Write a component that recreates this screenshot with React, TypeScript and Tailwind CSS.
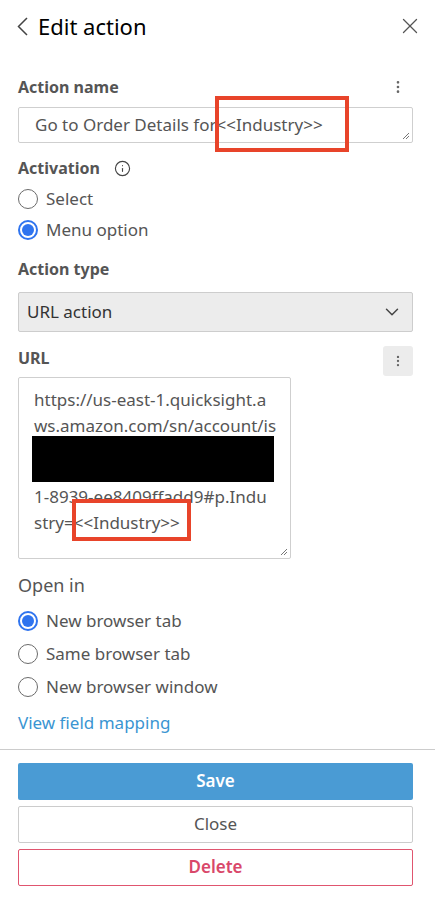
import { X, EllipsisVertical, ChevronDown, Info } from 'lucide-react';

function Radio({ checked, label, h = 'h-[33px]' }: { checked?: boolean; label: string; h?: string }) {
  return (
    <div className={`flex items-center ${h}`}>
      {checked ? (
        <span className="w-[20px] h-[20px] rounded-full border-2 border-[#2f74ef] flex items-center justify-center">
          <span className="w-[12px] h-[12px] rounded-full bg-[#2f74ef]" />
        </span>
      ) : (
        <span className="w-[20px] h-[20px] rounded-full border border-[#6b6b6b]" />
      )}
      <span className="ml-[8px] text-[17px] text-[#555]">{label}</span>
    </div>
  );
}

function Grip() {
  return (
    <svg className="absolute right-[2px] bottom-[2px]" width="8" height="8" viewBox="0 0 8 8">
      <path d="M7 1 L1 7 M7 4 L4 7" stroke="#777" strokeWidth="1" />
    </svg>
  );
}

export default function App() {
  return (
    <div className="w-[435px] h-[897px] bg-white text-[#555] font-['Noto_Sans',sans-serif]">
      {/* Header */}
      <div className="flex items-center h-[52px] pl-[17px] pr-[12px]">
        <svg width="11" height="19" viewBox="0 0 11 19">
          <polyline points="10,1 1.5,9.5 10,18" fill="none" stroke="#444" strokeWidth="1.5" />
        </svg>
        <h1 className="ml-[10px] text-[22px] text-black leading-none">Edit action</h1>
        <X size={26} strokeWidth={1.2} className="ml-auto text-[#555]" />
      </div>

      <div className="pl-[18px] pr-[22px] pt-[24px]">
        {/* Action name */}
        <div className="flex items-center justify-between h-[22px]">
          <span className="text-[16px] font-bold">Action name</span>
          <EllipsisVertical size={16} className="mr-[7px] text-[#666]" />
        </div>
        <div className="relative mt-[9px] h-[36px] border border-[#cfcfcf] rounded-[2px] flex items-center pl-[16px] text-[17px]">
          Go to Order Details for&lt;&lt;Industry&gt;&gt;
          <Grip />
          <div className="absolute left-[196px] top-[-12px] w-[134px] h-[56px] border-[4px] border-[#e8442a]" />
        </div>

        {/* Activation */}
        <div className="flex items-center mt-[14px] h-[22px]">
          <span className="text-[16px] font-bold">Activation</span>
          <Info size={17} strokeWidth={1.6} className="ml-[14px] text-[#444]" />
        </div>
        <div className="mt-[4px]">
          <Radio h="h-[31px]" label="Select" />
          <Radio h="h-[31px]" checked label="Menu option" />
        </div>

        {/* Action type */}
        <div className="mt-[12px] h-[22px] text-[16px] font-bold">Action type</div>
        <div className="mt-[13px] h-[40px] bg-[#ececec] border border-[#cdcdcd] rounded-[2px] flex items-center px-[8px]">
          <span className="text-[17px] text-[#333]">URL action</span>
          <ChevronDown size={22} strokeWidth={1.6} className="ml-auto mr-[1px] text-[#444]" />
        </div>

        {/* URL */}
        <div className="flex items-start justify-between mt-[14px] h-[30px]">
          <span className="h-[22px] text-[16px] font-bold">URL</span>
          <span className="w-[30px] h-[30px] bg-[#ececec] rounded-[3px] flex items-center justify-center">
            <EllipsisVertical size={14} className="text-[#666]" />
          </span>
        </div>
        <div className="relative mt-[1px] w-[273px] h-[182px] border border-[#cfcfcf] rounded-[2px] pl-[15px] pr-[10px] pt-[9px] text-[17px] leading-[26px]">
          <div>https://us-east-1.quicksight.a</div>
          <div>ws.amazon.com/sn/account/is</div>
          <div className="ml-[-2px] w-[242px] h-[46px] bg-black mt-[-3px] mb-[2px]" />
          <div>1-8939-ee8409ffadd9#p.Indu</div>
          <div>stry=&lt;&lt;Industry&gt;&gt;</div>
          <Grip />
          <div className="absolute left-[53px] top-[121px] w-[119px] h-[42px] border-[4px] border-[#e8442a]" />
        </div>

        {/* Open in */}
        <div className="mt-[13px] h-[24px] text-[18px] text-[#555]">Open in</div>
        <div className="mt-[8px]">
          <Radio checked label="New browser tab" />
          <Radio label="Same browser tab" />
          <Radio label="New browser window" />
        </div>
        <div className="mt-[7px] text-[17px] text-[#3a95d2]">View field mapping</div>
      </div>

      <div className="mt-[13px] border-t border-[#cccccc]" />

      <div className="pl-[18px] pr-[22px] pt-[13px] flex flex-col gap-[6px]">
        <button className="h-[37px] bg-[#4a9bd4] rounded-[2px] text-white font-semibold text-[17px]">Save</button>
        <button className="h-[37px] border border-[#cccccc] rounded-[2px] text-[#555] text-[17px]">Close</button>
        <button className="h-[37px] border border-[#e0556f] rounded-[2px] text-[#d9486a] font-semibold text-[17px]">Delete</button>
      </div>
    </div>
  );
}
